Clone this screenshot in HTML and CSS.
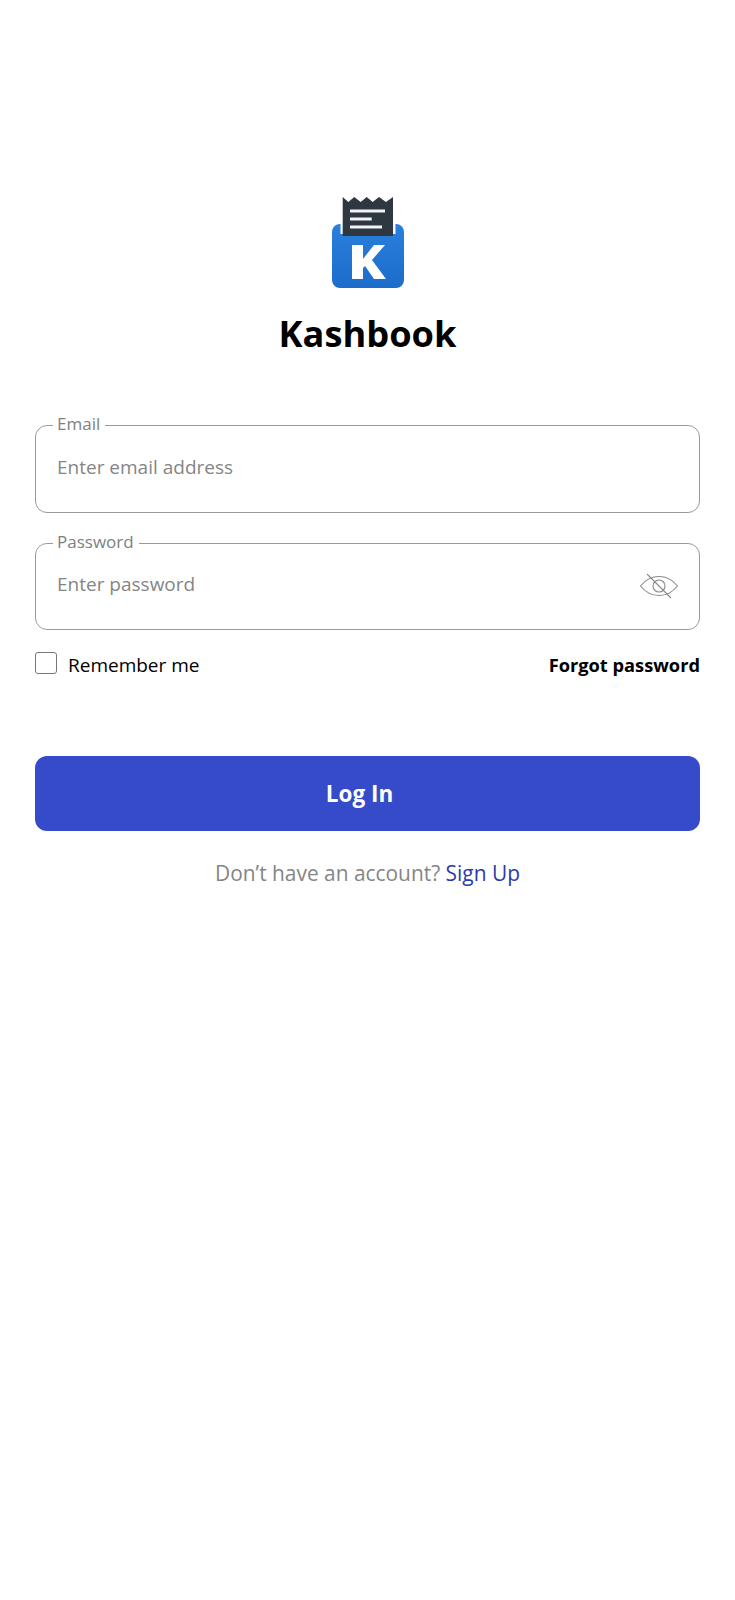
FILE: index.html
```html
<!DOCTYPE html>
<html lang="en">
<head>
<meta charset="utf-8">
<title>Kashbook</title>
<link rel="stylesheet" href="styles.css">
</head>
<body>
<main class="page">
  <div class="brand">
    <svg class="logo" width="75" height="92" viewBox="0 0 75 92">
      <defs>
        <linearGradient id="blue" x1="0" y1="0" x2="0" y2="1">
          <stop offset="0" stop-color="#2a80dc"/>
          <stop offset="1" stop-color="#1c6ccb"/>
        </linearGradient>
      </defs>
      <rect x="2" y="27" width="72" height="64" rx="8" fill="url(#blue)"/>
      <rect x="10.500" y="27" width="55" height="10" fill="#f4f8fc"/>
      <path d="M12.700 0L18.300 5L24.300 0L30.700 5L36.700 0L42.700 5L49 0L56 5L63 0V39H12.700Z" fill="#2f3740"/>
      <path d="M20 14H55M20 22H41.700M20 30H52" stroke="#f2f4f6" stroke-width="2.800" fill="none"/>
      <path d="M22 82V48H33V62L44 48H55L42 63L56 82H44L35 69L33 71V82Z" fill="#fff"/>
    </svg>
    <h1 class="title">Kashbook</h1>
  </div>

  <form class="form">
    <fieldset class="field field-first">
      <legend class="legend">Email</legend>
      <span class="placeholder">Enter email address</span>
    </fieldset>
    <fieldset class="field field-second">
      <legend class="legend">Password</legend>
      <span class="placeholder">Enter password</span>
      <svg class="eye" width="40" height="28" viewBox="0 0 40 28" fill="none" stroke="#8a8a8a" stroke-width="1.100">
        <path d="M1.500 14C7 7 13 4.500 20 4.500S33 7 38.500 14C33 21 27 23.500 20 23.500S7 21 1.500 14Z"/>
        <circle cx="20" cy="14" r="6"/>
        <path d="M8 2L32 26"/>
      </svg>
    </fieldset>

    <div class="options">
      <label class="remember"><span class="checkbox"></span><span class="remember-text">Remember me</span></label>
      <a class="forgot">Forgot password</a>
    </div>

    <button class="submit" type="button"><span class="submit-label">Log In</span></button>
    <p class="signup">Don’t have an account? <a class="signup-link">Sign Up</a></p>
  </form>
</main>
</body>
</html>
```
FILE: styles.css
```css
* { box-sizing: border-box; }
html, body { margin: 0; background: #fff; }
body { font-family: "Open Sans", "Noto Sans", sans-serif; color: #000; }
.page { width: 735px; height: 1600px; padding: 197px 35px 0 35px; overflow: hidden; }
.brand { display: flex; flex-direction: column; align-items: center; }
.logo { display: block; }
.title { margin: 19px 0 0; font-size: 36.200px; line-height: 50px; font-weight: 700; color: #000; }
.form { margin-top: 56px; display: flex; flex-direction: column; }
.field { position: relative; margin: 0; height: 98px; padding: 0 21px; border: 1px solid #9a9a9a; border-radius: 12px; display: block; min-width: 0; }
.field-first { height: 99px; }
.field-second { margin-top: 19px; }
.legend { padding: 0 5px 2px 4px; margin-left: -4px; font-size: 17px; line-height: 20px; color: #808080; }
.placeholder { display: block; margin-top: 18px; font-size: 19px; line-height: 26px; color: #858585; }
.field-second .placeholder { margin-top: 17px; }
.eye { position: absolute; right: 20px; top: 18px; }
.options { margin-top: 17px; display: flex; justify-content: space-between; align-items: center; }
.remember { display: flex; align-items: center; gap: 11px; font-size: 19px; line-height: 26px; }
.remember-text { padding-top: 5px; }
.checkbox { width: 22px; height: 22px; border: 1px solid #777; border-radius: 3px; background: #fff; }
.forgot { padding-top: 5px; font-size: 18.250px; line-height: 26px; font-weight: 700; }
.submit { margin-top: 78px; width: 100%; height: 75px; border: 0; border-radius: 12px; background: #354bca; color: #fff; font-family: inherit; font-size: 22.500px; font-weight: 700; padding: 0 16px 0 0; }
.submit-label { display: block; }
.signup { margin: 28px 0 0; text-align: center; font-size: 20.900px; line-height: 28px; color: #858585; }
.signup-link { color: #2c3ab0; }
```
